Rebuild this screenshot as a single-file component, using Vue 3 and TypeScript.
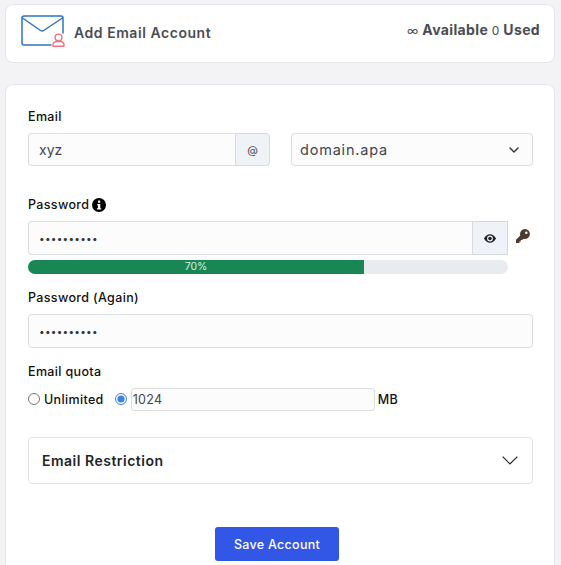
<script setup lang="ts">
import { ref } from 'vue'
const user = ref('xyz')
const pass = ref('abcdefghij')
const strength = ref(70)
</script>

<template>
  <div class="page">
    <header class="card head">
      <div class="title">
        <svg class="mail" width="44" height="32" viewBox="0 0 44 32" fill="none">
          <path d="M30 30H3A2 2 0 0 1 1 28V3A2 2 0 0 1 3 1H40A2 2 0 0 1 42 3V18" stroke="#2f74c0" stroke-width="1.500" stroke-linecap="round"/>
          <path d="M1.500 3 19.500 15.500a2.800 2.800 0 0 0 3.200 0L41.500 3" stroke="#2f74c0" stroke-width="1.500" stroke-linecap="round"/>
          <circle cx="37.500" cy="22.500" r="3.400" stroke="#f4707f" stroke-width="1.400"/>
          <path d="M32 31.300v-1.300a3.500 3.500 0 0 1 3.500-3.500h4a3.500 3.500 0 0 1 3.500 3.500v1.300Z" stroke="#f4707f" stroke-width="1.400" stroke-linejoin="round"/>
        </svg>
        <h1>Add Email Account</h1>
      </div>
      <div class="usage"><span class="num">∞</span> Available <span class="num">0</span> Used</div>
    </header>

    <main class="card form">
      <div class="email-row">
        <div>
          <label class="lbl">Email</label>
          <div class="group">
            <input class="ctl" v-model="user" />
            <span class="addon at">@</span>
          </div>
        </div>
        <div class="select">
          <span>domain.apa</span>
          <svg width="12" height="8" viewBox="0 0 12 8" fill="none"><path d="M2 2 6 6l4-4" stroke="#343a40" stroke-width="1.500" stroke-linecap="round" stroke-linejoin="round"/></svg>
        </div>
      </div>

      <label class="lbl pw-label">Password
        <svg class="info" width="14" height="14" viewBox="0 0 14 14">
          <circle cx="7" cy="7" r="7" fill="#000"/>
          <rect x="6" y="2.600" width="2.200" height="2.200" rx=".6" fill="#fff"/>
          <path d="M5.300 6h3v4.200h.9v1.200H4.900v-1.200h1V7.200h-.6Z" fill="#fff"/>
        </svg>
      </label>
      <div class="pw-row">
        <div class="pw-col">
          <div class="group">
            <input class="ctl dots" type="password" v-model="pass" />
            <span class="addon eye">
              <svg width="12" height="9" viewBox="0 0 14 10">
                <path fill="#212529" fill-rule="evenodd" d="M7 0c3 0 5.600 2 7 5-1.400 3-4 5-7 5S1.400 8 0 5c1.400-3 4-5 7-5Zm0 1.600a3.400 3.400 0 1 0 0 6.800 3.400 3.400 0 0 0 0-6.800Z"/>
                <circle cx="7" cy="5" r="2.100" fill="#212529"/>
              </svg>
            </span>
          </div>
          <div class="bar"><div class="fill" :style="{ width: strength + '%' }">{{ strength }}%</div></div>
        </div>
        <svg class="key" width="14" height="14" viewBox="0 0 14 14">
          <path fill="#4d3b30" fill-rule="evenodd" d="M9 0a5 5 0 1 1-1.500 9.800L6.200 11H4.800v1.400H3.400V14H0v-3.200l4.300-4.300A5 5 0 0 1 9 0Zm1.300 2.400a1.300 1.300 0 1 0 0 2.600 1.300 1.300 0 0 0 0-2.600Z"/>
        </svg>
      </div>

      <label class="lbl again">Password (Again)</label>
      <input class="ctl dots full" type="password" v-model="pass" />

      <label class="lbl quota">Email quota</label>
      <div class="quota-row">
        <input type="radio" name="q" class="radio" />
        <span class="opt">Unlimited</span>
        <input type="radio" name="q" class="radio second" checked />
        <input class="mini" value="1024" />
        <span class="opt mb">MB</span>
      </div>

      <div class="acc">
        <span>Email Restriction</span>
        <svg width="16" height="9" viewBox="0 0 16 9" fill="none"><path d="M.7.7 8 8 15.300.7" stroke="#212529" stroke-width="1.200"/></svg>
      </div>

      <div class="actions"><button class="save">Save Account</button></div>
    </main>
  </div>
</template>

<style>
html, body { margin: 0; background: #f3f3f6; overflow: hidden; }
</style>

<style scoped>
.page {
  height: 565px;
  overflow: hidden;
  box-sizing: border-box;
  padding: 4px 6px 0 5px;
  font-family: Inter, "Noto Sans", sans-serif;
  color: #212529;
}
.card {
  background: #fff;
  border: 1px solid #e4e5e8;
  border-radius: 8px;
  box-sizing: border-box;
}
.head {
  height: 59px;
  display: flex;
  justify-content: space-between;
  padding: 0 14px 0 15px;
}
.title { display: flex; align-items: flex-start; gap: 9px; padding-top: 10px; }
h1 { margin: 0; font-size: 14px; font-weight: 600; color: #4a4d55; letter-spacing: .55px; padding-top: 9px; line-height: 17px; }
.usage { font-size: 14px; font-weight: 700; color: #4a4d55; padding-top: 16px; letter-spacing: .35px; }
.num { font-weight: 400; font-size: 12px; }
.form {
  margin-top: 21px;
  height: 520px;
  padding: 23px 22px 0;
}
.lbl { display: block; font-size: 12.500px; font-weight: 500; color: #111; line-height: 18px; letter-spacing: .35px; }
.email-row { display: grid; grid-template-columns: 242px 242px; gap: 21px; align-items: end; }
.email-row .lbl { margin-bottom: 7px; }
.group { display: flex; height: 33px; }
.ctl {
  flex: 1;
  min-width: 0;
  box-sizing: border-box;
  height: 100%;
  margin: 0;
  padding: 0 10px;
  background: #fcfcfc;
  border: 1px solid #dcdee3;
  border-radius: 4px 0 0 4px;
  border-right: 0;
  font: 400 14px Inter, sans-serif;
  color: #42464f;
  outline: none;
}
.addon {
  box-sizing: border-box;
  display: flex;
  align-items: center;
  justify-content: center;
  background: #eff2f7;
  border: 1px solid #d5d9e0;
  border-radius: 0 4px 4px 0;
}
.at { width: 35px; font-size: 11px; color: #4a4d55; }
.select {
  height: 33px;
  box-sizing: border-box;
  display: flex;
  align-items: center;
  justify-content: space-between;
  padding: 0 12px 0 8px;
  background: #fcfcfc;
  border: 1px solid #dcdee3;
  border-radius: 4px;
  font-size: 14.500px;
  color: #42464f;
  letter-spacing: .8px;
}
.pw-label { margin-top: 30px; display: flex; align-items: center; gap: 3px; }
.pw-row { display: flex; margin-top: 7px; gap: 8px; }
.pw-col { width: 480px; }
.pw-col .group { height: 34px; }
.eye { width: 36px; border-radius: 0; }
.dots { font-size: 10px; letter-spacing: .25px; color: #33373f; }
.key { margin-top: 8px; }
.bar {
  margin-top: 5px;
  height: 14px;
  border-radius: 7px;
  background: #e9ecef;
  overflow: hidden;
}
.fill {
  height: 100%;
  background: #198754;
  color: #d6efe2;
  font-size: 10.500px;
  line-height: 14px;
  text-align: center;
}
.again { margin-top: 15px; }
.full { display: block; width: 505px; height: 34px; margin-top: 7px; border-right: 1px solid #dcdee3; border-radius: 4px; }
.quota { margin-top: 15px; }
.quota-row { display: flex; align-items: center; height: 23px; margin-top: 7px; font-size: 12.500px; letter-spacing: .35px; }
.radio { width: 12px; height: 12px; margin: 0 4px 2px 0; accent-color: #3b82e6; }
.second { margin: 0 4px 2px 11px; }
.opt { font-weight: 500; color: #111; }
.mini {
  box-sizing: border-box;
  width: 244px;
  height: 23px;
  padding: 0 1px;
  background: #fcfcfc;
  border: 1px solid #dcdee3;
  border-radius: 3px;
  font: 400 12.500px Inter, sans-serif;
  letter-spacing: .3px;
  color: #42464f;
  outline: none;
}
.mb { margin-left: 3px; }
.acc {
  box-sizing: border-box;
  width: 505px;
  height: 47px;
  margin-top: 26px;
  display: flex;
  align-items: center;
  justify-content: space-between;
  padding: 0 14px 0 13px;
  border: 1px solid #e2e3e6;
  border-radius: 4px;
  font-size: 14px;
  font-weight: 600;
  letter-spacing: .5px;
  color: #212529;
}
.actions { display: flex; justify-content: center; margin-top: 43px; width: 498px; }
.save {
  width: 124px;
  height: 34px;
  border: 0;
  border-radius: 3px;
  background: #3256e6;
  color: #fff;
  font: 500 12.500px Inter, sans-serif;
  letter-spacing: .3px;
}
</style>
